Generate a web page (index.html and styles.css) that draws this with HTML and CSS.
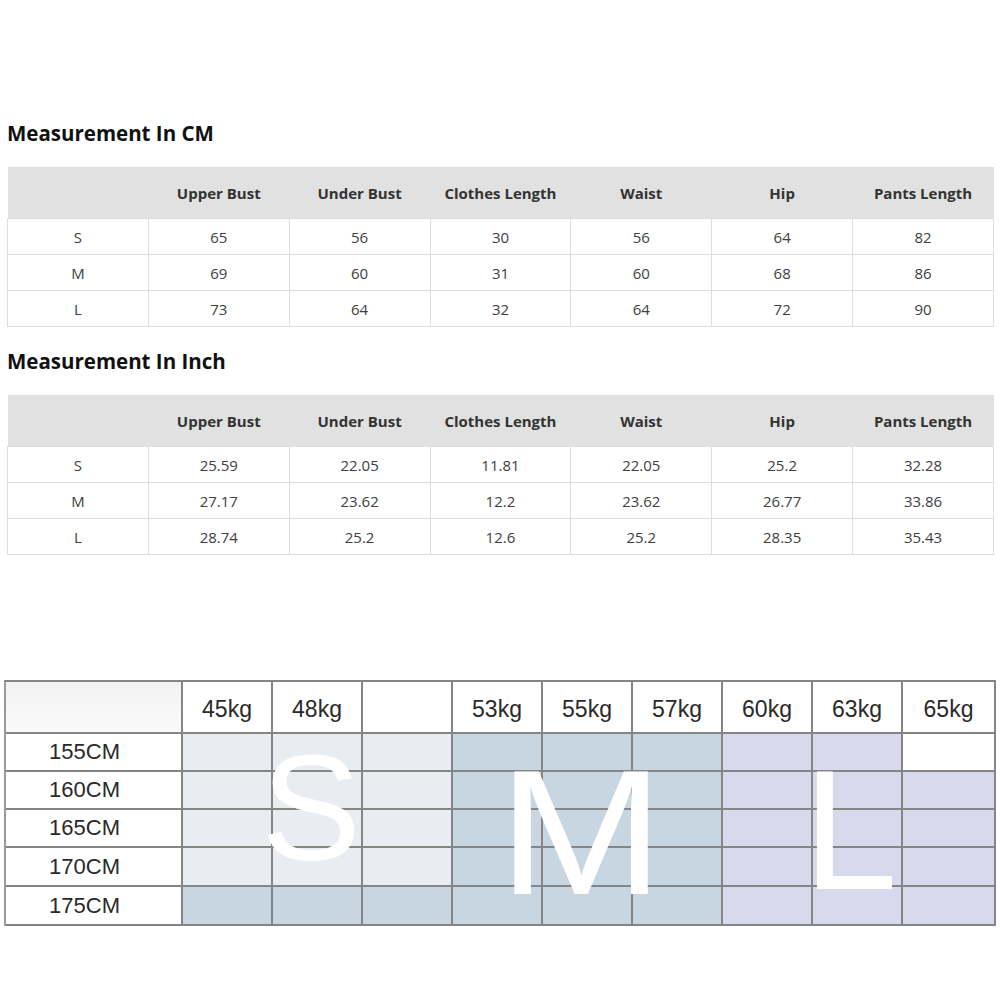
FILE: index.html
```html
<!DOCTYPE html>
<html>
<head>
<meta charset="utf-8">
<link rel="stylesheet" href="styles.css">
</head>
<body>
<div class="page">
  <h2 class="title first">Measurement In CM</h2>
  <table class="size-table">
    <thead>
      <tr><th></th><th>Upper Bust</th><th>Under Bust</th><th>Clothes Length</th><th>Waist</th><th>Hip</th><th>Pants Length</th></tr>
    </thead>
    <tbody>
      <tr><td>S</td><td>65</td><td>56</td><td>30</td><td>56</td><td>64</td><td>82</td></tr>
      <tr><td>M</td><td>69</td><td>60</td><td>31</td><td>60</td><td>68</td><td>86</td></tr>
      <tr><td>L</td><td>73</td><td>64</td><td>32</td><td>64</td><td>72</td><td>90</td></tr>
    </tbody>
  </table>

  <h2 class="title">Measurement In Inch</h2>
  <table class="size-table">
    <thead>
      <tr><th></th><th>Upper Bust</th><th>Under Bust</th><th>Clothes Length</th><th>Waist</th><th>Hip</th><th>Pants Length</th></tr>
    </thead>
    <tbody>
      <tr><td>S</td><td>25.59</td><td>22.05</td><td>11.81</td><td>22.05</td><td>25.2</td><td>32.28</td></tr>
      <tr><td>M</td><td>27.17</td><td>23.62</td><td>12.2</td><td>23.62</td><td>26.77</td><td>33.86</td></tr>
      <tr><td>L</td><td>28.74</td><td>25.2</td><td>12.6</td><td>25.2</td><td>28.35</td><td>35.43</td></tr>
    </tbody>
  </table>
</div>

<div class="chart">
  <div class="grid">
    <div class="c corner"></div>
    <div class="c hd">45kg</div><div class="c hd">48kg</div><div class="c hd"></div>
    <div class="c hd">53kg</div><div class="c hd">55kg</div><div class="c hd">57kg</div>
    <div class="c hd">60kg</div><div class="c hd">63kg</div><div class="c hd">65kg</div>

    <div class="c lbl">155CM</div>
    <div class="c s"></div><div class="c s"></div><div class="c s"></div>
    <div class="c m"></div><div class="c m"></div><div class="c m"></div>
    <div class="c l"></div><div class="c l"></div><div class="c w"></div>

    <div class="c lbl">160CM</div>
    <div class="c s"></div><div class="c s"></div><div class="c s"></div>
    <div class="c m"></div><div class="c m"></div><div class="c m"></div>
    <div class="c l"></div><div class="c l"></div><div class="c l"></div>

    <div class="c lbl">165CM</div>
    <div class="c s"></div><div class="c s"></div><div class="c s"></div>
    <div class="c m"></div><div class="c m"></div><div class="c m"></div>
    <div class="c l"></div><div class="c l"></div><div class="c l"></div>

    <div class="c lbl">170CM</div>
    <div class="c s"></div><div class="c s"></div><div class="c s"></div>
    <div class="c m"></div><div class="c m"></div><div class="c m"></div>
    <div class="c l"></div><div class="c l"></div><div class="c l"></div>

    <div class="c lbl">175CM</div>
    <div class="c m"></div><div class="c m"></div><div class="c m"></div>
    <div class="c m"></div><div class="c m"></div><div class="c m"></div>
    <div class="c l"></div><div class="c l"></div><div class="c l"></div>
  </div>
  <span class="big big-s">S</span>
  <span class="big big-m">M</span>
  <span class="big big-l">L</span>
</div>
</body>
</html>
```

FILE: styles.css
```css
html, body {
  margin: 0;
  padding: 0;
  background: #fff;
}

.page {
  padding: 119px 0 0 7px;
  font-family: "Open Sans", "Noto Sans", sans-serif;
}

.title {
  margin: 20px 0 20px 0;
  font-size: 20.5px;
  line-height: 28px;
  font-weight: 700;
  color: #111;
}

.title.first {
  margin-top: 0;
}

.size-table {
  border-collapse: collapse;
  table-layout: fixed;
  width: 987px;
  font-size: 15px;
  color: #333;
}

.size-table th {
  background: #e1e1e1;
  height: 51px;
  padding: 0;
  font-weight: 700;
  color: #333;
  text-align: center;
  border-right: 1px solid #e1e1e1;
}

.size-table td {
  height: 35px;
  padding: 0;
  text-align: center;
  border: 1px solid #dedede;
  color: #404040;
}

.chart {
  position: relative;
  margin: 125px 0 0 4px;
  width: 992px;
  font-family: "Liberation Sans", Arial, sans-serif;
}

.grid {
  display: grid;
  grid-template-columns: 177px repeat(8, 90px) 93px;
  grid-template-rows: 52px 38px 38px 38px 39px 39px;
  border-left: 2px solid #9a9a9a;
  border-top: 2px solid #858585;
}

.c {
  box-sizing: border-box;
  border-right: 2px solid #858585;
  border-bottom: 2px solid #858585;
  display: flex;
  align-items: center;
  justify-content: center;
  font-size: 22px;
  color: #2a2a2a;
}

.corner {
  background: linear-gradient(#f2f2f2, #fafafa);
}

.hd {
  background: #fff;
  padding-top: 5px;
  font-size: 23px;
}

.lbl {
  background: #fff;
  padding-right: 18px;
}

.s { background: #e9ecf1; }
.m { background: #c8d6e2; }
.l { background: #d9d9ed; }
.w { background: #fff; }

.big {
  position: absolute;
  color: #fff;
  line-height: 1;
  font-family: "Liberation Sans", Arial, sans-serif;
}

.big-s {
  font-size: 150px;
  left: 257px;
  top: 53px;
}

.big-m {
  font-size: 178px;
  left: 494px;
  top: 64px;
  transform: scaleX(1.12);
  transform-origin: left top;
}

.big-l {
  font-size: 170px;
  left: 799px;
  top: 65px;
}
```
